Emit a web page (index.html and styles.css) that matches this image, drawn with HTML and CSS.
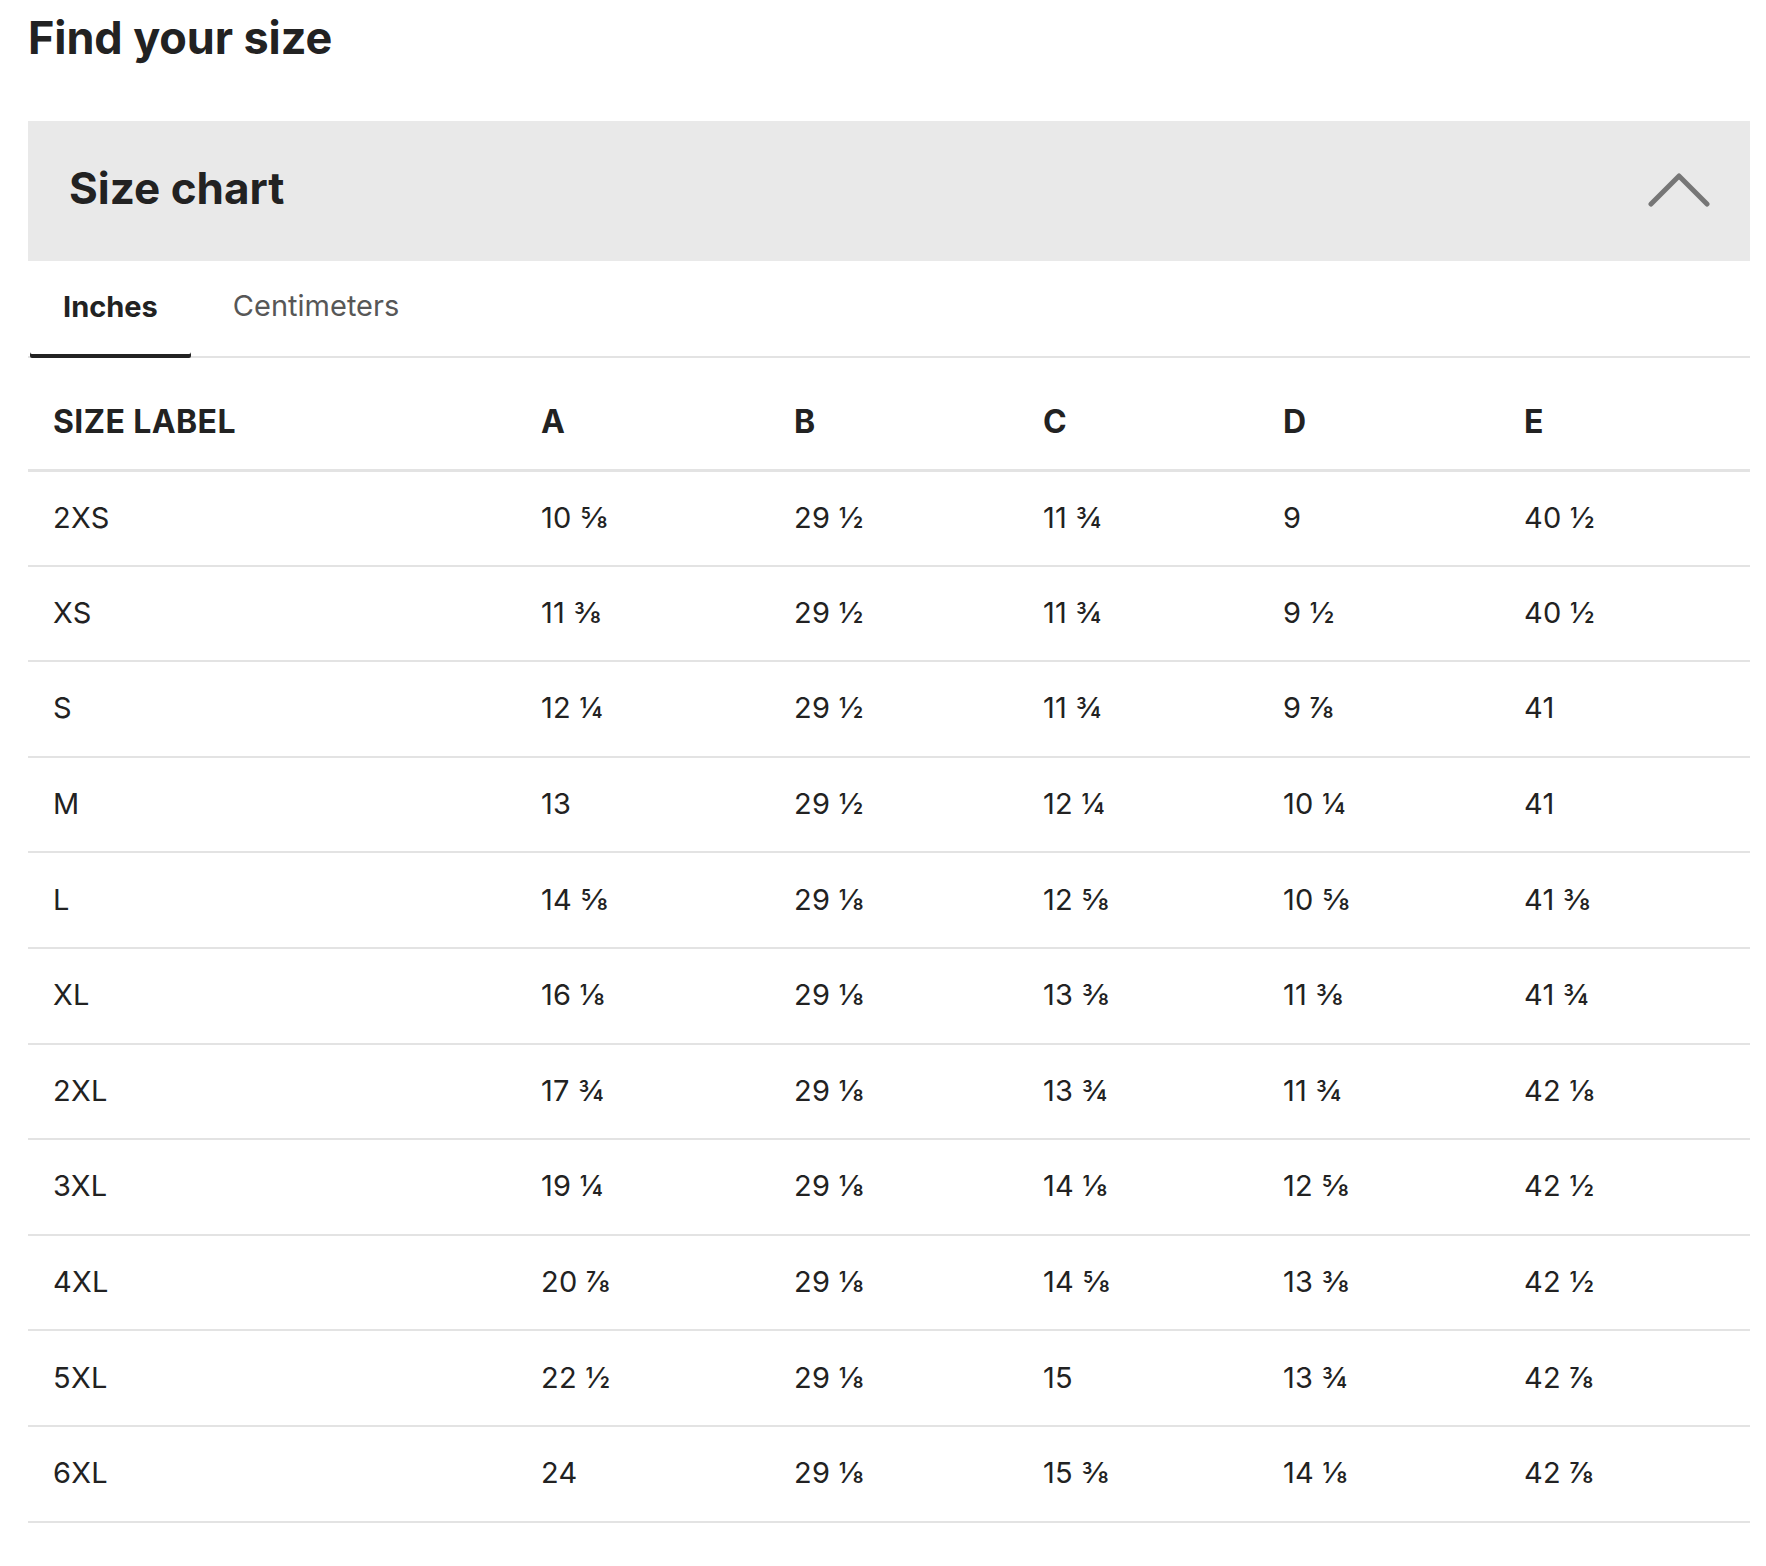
FILE: index.html
```html
<!DOCTYPE html>
<html lang="en">
<head>
<meta charset="utf-8">
<title>Find your size</title>
<link rel="stylesheet" href="styles.css">
</head>
<body>
<main class="page">
  <h1 class="page-title">Find your size</h1>
  <section class="chart">
    <header class="chart-head">
      <h2 class="chart-title">Size chart</h2>
      <svg class="chevron" width="62" height="38" viewBox="0 0 62 38" aria-hidden="true">
        <path d="M3 34 L31 6 L59 34" fill="none" stroke="#767676" stroke-width="5" stroke-linecap="round" stroke-linejoin="round"/>
      </svg>
    </header>
    <nav class="tabs">
      <span class="tab tab-active">Inches</span>
      <span class="tab">Centimeters</span>
    </nav>
    <table class="sizes">
      <colgroup>
        <col class="c-label"><col class="c-a"><col class="c-b"><col class="c-c"><col class="c-d"><col class="c-e">
      </colgroup>
      <thead>
        <tr><th>SIZE LABEL</th><th>A</th><th>B</th><th>C</th><th>D</th><th>E</th></tr>
      </thead>
      <tbody>
        <tr><td>2XS</td><td>10 ⅝</td><td>29 ½</td><td>11 ¾</td><td>9</td><td>40 ½</td></tr>
        <tr><td>XS</td><td>11 ⅜</td><td>29 ½</td><td>11 ¾</td><td>9 ½</td><td>40 ½</td></tr>
        <tr><td>S</td><td>12 ¼</td><td>29 ½</td><td>11 ¾</td><td>9 ⅞</td><td>41</td></tr>
        <tr><td>M</td><td>13</td><td>29 ½</td><td>12 ¼</td><td>10 ¼</td><td>41</td></tr>
        <tr><td>L</td><td>14 ⅝</td><td>29 ⅛</td><td>12 ⅝</td><td>10 ⅝</td><td>41 ⅜</td></tr>
        <tr><td>XL</td><td>16 ⅛</td><td>29 ⅛</td><td>13 ⅜</td><td>11 ⅜</td><td>41 ¾</td></tr>
        <tr><td>2XL</td><td>17 ¾</td><td>29 ⅛</td><td>13 ¾</td><td>11 ¾</td><td>42 ⅛</td></tr>
        <tr><td>3XL</td><td>19 ¼</td><td>29 ⅛</td><td>14 ⅛</td><td>12 ⅝</td><td>42 ½</td></tr>
        <tr><td>4XL</td><td>20 ⅞</td><td>29 ⅛</td><td>14 ⅝</td><td>13 ⅜</td><td>42 ½</td></tr>
        <tr><td>5XL</td><td>22 ½</td><td>29 ⅛</td><td>15</td><td>13 ¾</td><td>42 ⅞</td></tr>
        <tr><td>6XL</td><td>24</td><td>29 ⅛</td><td>15 ⅜</td><td>14 ⅛</td><td>42 ⅞</td></tr>
      </tbody>
    </table>
  </section>
</main>
</body>
</html>
```

FILE: styles.css
```css
* { box-sizing: border-box; }

html, body {
  margin: 0;
  background: #ffffff;
}

body {
  font-family: "Inter", "Liberation Sans", sans-serif;
  color: #222222;
}

.page {
  padding: 0 16px 0 28px;
}

.page-title {
  margin: 0;
  padding-top: 10px;
  font-size: 45px;
  line-height: 56px;
  font-weight: 700;
  letter-spacing: -0.1px;
  height: 121px;
}

.chart-head {
  display: flex;
  align-items: center;
  justify-content: space-between;
  height: 140px;
  background: #e9e9e9;
  padding: 0 40px 6px 41px;
}

.chart-title {
  margin: 0;
  font-size: 44px;
  font-weight: 700;
  letter-spacing: 0;
}

.chevron {
  display: block;
  margin-top: 2px;
}

.tabs {
  display: flex;
  height: 97px;
  border-bottom: 2px solid #e3e3e3;
  padding-left: 2px;
  align-items: stretch;
}

.tab {
  display: flex;
  align-items: center;
  padding: 0 33px 6px 33px;
  font-size: 29px;
  color: #575757;
  font-weight: 400;
}

.tab + .tab {
  margin-left: 9px;
}

.tab-active {
  color: #222222;
  font-weight: 700;
  box-shadow: inset 0 -4px 0 #222222;
  margin-bottom: -2px;
  border-radius: 0 0 2px 2px;
}

.sizes {
  width: 100%;
  border-collapse: collapse;
  table-layout: fixed;
}

.c-label { width: 488px; }
.c-a { width: 253px; }
.c-b { width: 249px; }
.c-c { width: 240px; }
.c-d { width: 241px; }

.sizes th {
  text-align: left;
  font-size: 32px;
  font-weight: 700;
  letter-spacing: 0.4px;
  height: 112px;
  padding: 16px 0 0 25px;
  border-bottom: 3px solid #e3e3e3;
  vertical-align: middle;
}

.sizes td {
  font-size: 29px;
  font-weight: 400;
  letter-spacing: 0.3px;
  height: 95.6px;
  padding: 0 0 2px 25px;
  border-bottom: 2px solid #e3e3e3;
  vertical-align: middle;
}
```
